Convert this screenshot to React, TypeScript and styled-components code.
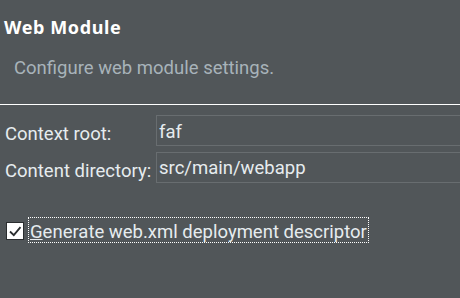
import React from 'react';
import styled, { createGlobalStyle } from 'styled-components';

const bg = '#515659';
const fieldBorder = '#686d70';
const labelColor = '#e6ecef';
const uiFont = 'Roboto, "Noto Sans", sans-serif';

const GlobalStyle = createGlobalStyle`
  html, body {
    margin: 0;
    padding: 0;
    background: ${bg};
    overflow: hidden;
  }
  body {
    font-family: ${uiFont};
  }
`;

export default function App() {
  return (
    <Page>
      <GlobalStyle />
      <Header>
        <Title>Web Module</Title>
        <Subtitle>Configure web module settings.</Subtitle>
      </Header>
      <Divider />
      <Form>
        <Label>Context root:</Label>
        <Field defaultValue="faf" $nudge={2} />
        <Label>Content directory:</Label>
        <Field defaultValue="src/main/webapp" />
      </Form>
      <CheckRow>
        <Box>
          <svg width="16" height="16" viewBox="0 0 16 16">
            <path d="M3 8.5 L6.8 12.2 L13.5 4.2" fill="none" stroke="#2a2d2f" strokeWidth="1.8" />
          </svg>
        </Box>
        <CheckLabel>
          <u>G</u>enerate web.xml deployment descriptor
        </CheckLabel>
      </CheckRow>
    </Page>
  );
}

const Page = styled.div`
  width: 460px;
  height: 298px;
  display: flex;
  flex-direction: column;
`;

const Header = styled.div`
  padding: 15px 0 0 4px;
  height: 104px;
  box-sizing: border-box;
`;

const Title = styled.div`
  color: #ffffff;
  font-family: "Noto Sans", sans-serif;
  font-size: 18px;
  font-weight: 700;
  letter-spacing: 0.6px;
  line-height: 24px;
`;

const Subtitle = styled.div`
  color: #a8b3ba;
  font-size: 18.5px;
  line-height: 22px;
  margin-top: 18px;
  padding-left: 10px;
`;

const Divider = styled.div`
  height: 1px;
  background: #ffffff;
`;

const Form = styled.div`
  display: grid;
  grid-template-columns: 146px 1fr;
  column-gap: 5px;
  row-gap: 6px;
  margin: 10px -10px 0 5px;
  align-items: center;
`;

const Label = styled.label`
  color: ${labelColor};
  font-size: 18.5px;
  padding-top: 6px;
  white-space: nowrap;
`;

const Field = styled.input<{ $nudge?: number }>`
  height: 31px;
  box-sizing: border-box;
  border: 1px solid ${fieldBorder};
  background: transparent;
  color: ${labelColor};
  font-family: inherit;
  font-size: 18.5px;
  padding: ${(p) => p.$nudge ?? 0}px 2px 0;
  outline: none;
`;

const CheckRow = styled.div`
  display: flex;
  align-items: flex-start;
  gap: 5px;
  margin: 35px 0 0 6px;
`;

const Box = styled.div`
  width: 18px;
  height: 18px;
  margin-top: 4px;
  box-sizing: border-box;
  border: 1px solid #2a2d2f;
  background: #ffffff;
  display: flex;
  align-items: center;
  justify-content: center;
`;

const CheckLabel = styled.span`
  color: ${labelColor};
  font-size: 18.5px;
  line-height: 20px;
  height: 24px;
  box-sizing: border-box;
  padding: 4px 1px 0;
  outline: 1px dotted #ffffff;
  white-space: nowrap;
`;
